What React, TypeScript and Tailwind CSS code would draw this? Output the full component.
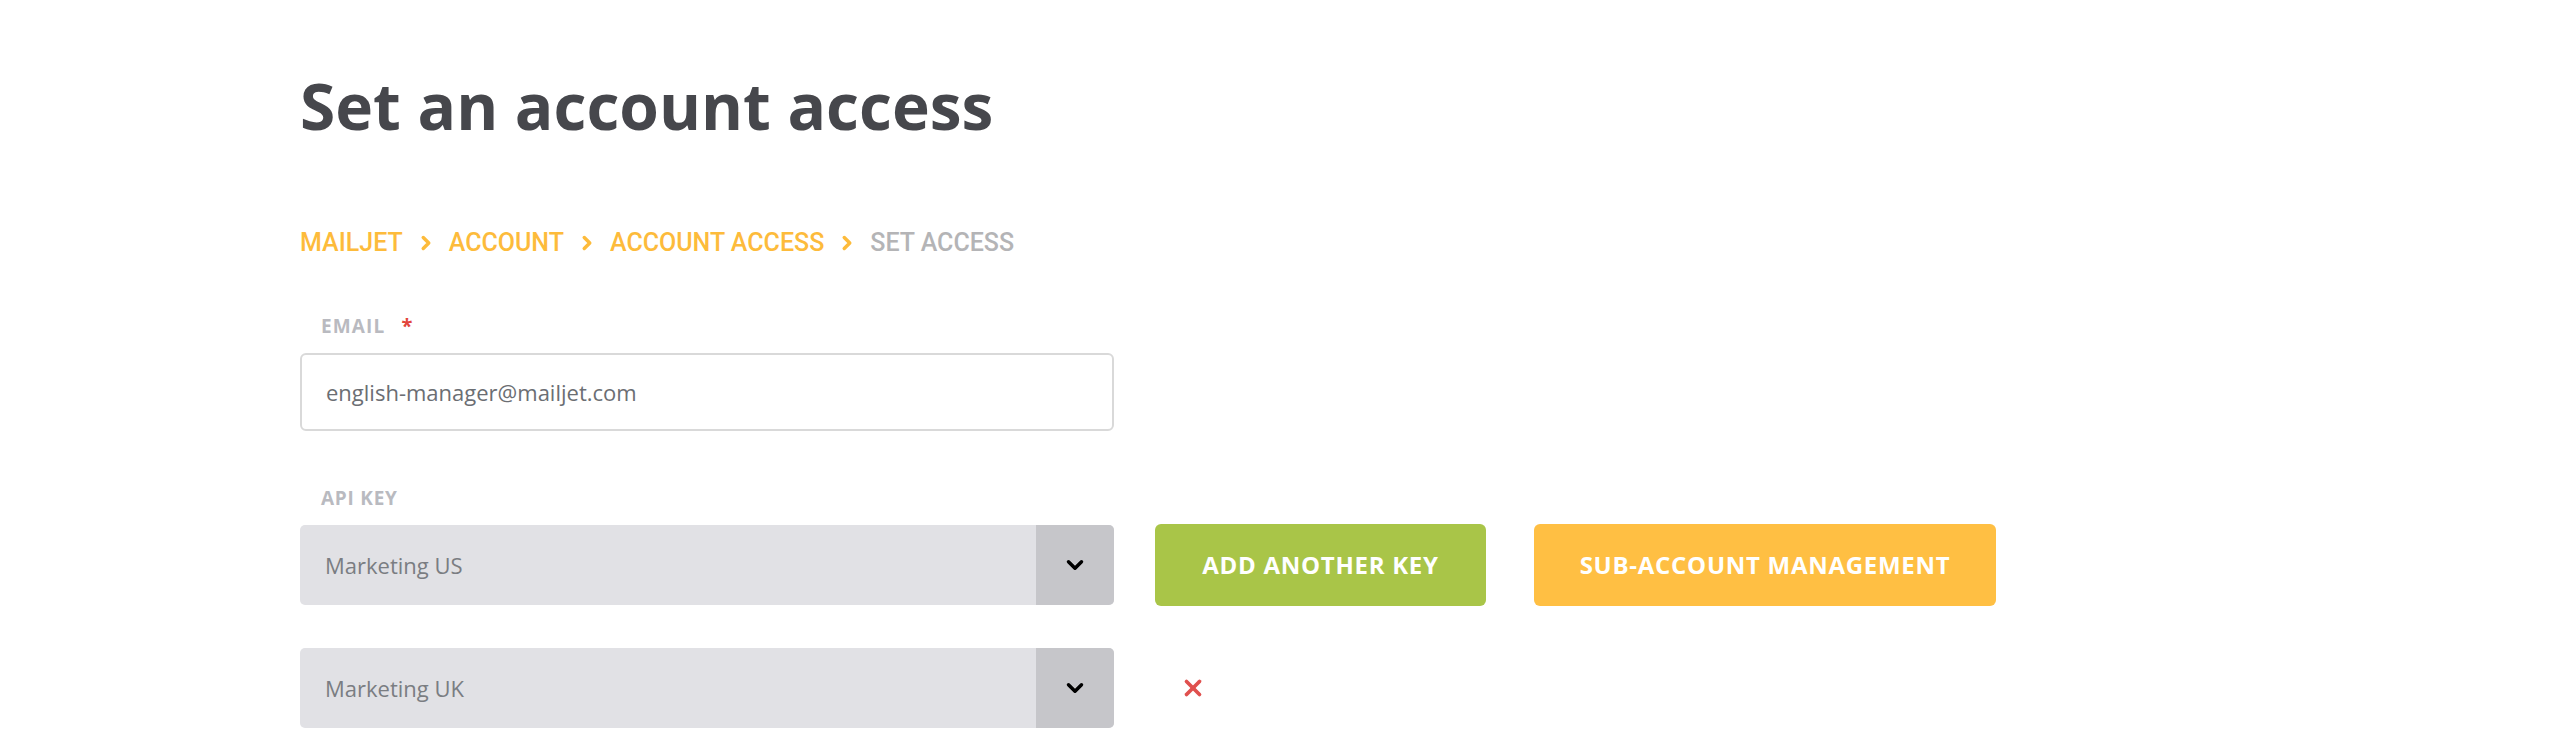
import { ChevronDown, ChevronRight, X } from 'lucide-react';

const crumbs = ['MAILJET', 'ACCOUNT', 'ACCOUNT ACCESS'];

function KeySelect({ value }: { value: string }) {
  return (
    <div className="flex h-[80px] w-[814px] overflow-hidden rounded-[5px] bg-[#e1e1e5]">
      <div className="flex flex-1 items-center pl-[25px] text-[22px] text-[#7a7d82]">
        {value}
      </div>
      <div className="flex w-[78px] items-center justify-center bg-[#c6c6ca]">
        <ChevronDown className="h-[26px] w-[26px] text-black" strokeWidth={3.2} />
      </div>
    </div>
  );
}

export default function App() {
  return (
    <div className="min-h-[752px] bg-white pl-[300px] pt-[74px] font-['Open_Sans',sans-serif]">
      {/* title */}
      <h1 className="text-[64px] font-bold leading-[64px] text-[#46474c]">
        Set an account access
      </h1>

      {/* breadcrumb */}
      <nav className="mt-[92px] flex items-center font-['Roboto',sans-serif] text-[25px] font-medium leading-[25px]">
        {crumbs.map((c) => (
          <div key={c} className="flex items-center">
            <span className="text-[#fdbb3b]">{c}</span>
            <ChevronRight className="mx-[12px] h-[22px] w-[22px] text-[#fdbb3b]" strokeWidth={3.8} />
          </div>
        ))}
        <span className="text-[#b4b4b6]">SET ACCESS</span>
      </nav>

      {/* email */}
      <div className="mt-[62px] flex items-center pl-[21px] text-[19px] font-bold leading-[18px] tracking-[0.06em] text-[#b9bac0]">
        EMAIL
        <span className="ml-[16px] text-[20px] text-[#e2453c]">*</span>
      </div>
      <div className="mt-[18px] flex h-[78px] w-[814px] items-center rounded-[6px] border-2 border-[#d9d9d9] pl-[24px] text-[22px] text-[#6b6e73]">
        english-manager@mailjet.com
      </div>

      {/* api key */}
      <div className="mt-[58px] pl-[21px] text-[19px] font-bold leading-[18px] tracking-[0.04em] text-[#b9bac0]">
        API KEY
      </div>
      <div className="mt-[17px] flex items-center">
        <KeySelect value="Marketing US" />
        <button className="ml-[41px] flex h-[82px] w-[331px] items-center justify-center rounded-[6px] bg-[#a9c548] text-[24px] font-bold tracking-[0.03em] text-white">
          ADD ANOTHER KEY
        </button>
        <button className="ml-[48px] flex h-[82px] w-[462px] items-center justify-center rounded-[6px] bg-[#ffbf43] text-[24px] font-bold tracking-[0.03em] text-white">
          SUB-ACCOUNT MANAGEMENT
        </button>
      </div>

      <div className="mt-[42px] flex items-center">
        <KeySelect value="Marketing UK" />
        <X className="ml-[66px] h-[26px] w-[26px] text-[#e0504e]" strokeWidth={3.4} />
      </div>
    </div>
  );
}
